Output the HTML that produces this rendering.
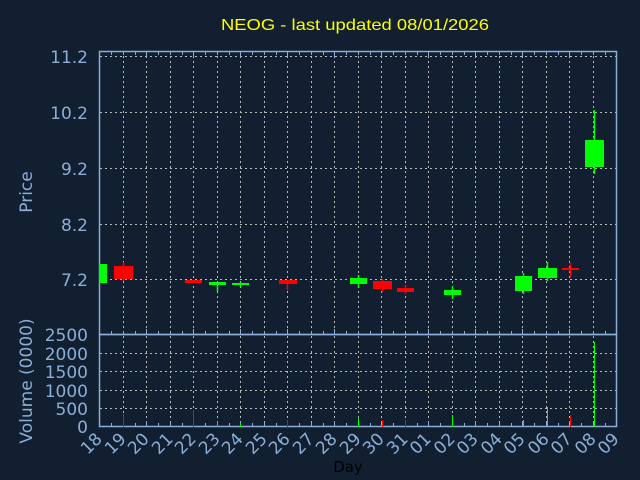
<!DOCTYPE html>
<html><head><meta charset="utf-8"><style>
html,body{margin:0;padding:0;background:#111f30;width:640px;height:480px;overflow:hidden}
svg{display:block}
text{font-family:"DejaVu Sans","Liberation Sans",sans-serif;fill:#8aaed6}
</style></head><body>
<svg width="640" height="480" viewBox="0 0 640 480">
<rect width="640" height="480" fill="#111f30"/>
<text x="355" y="30" text-anchor="middle" font-size="16" textLength="268" lengthAdjust="spacingAndGlyphs" style="fill:#ffff00;font-family:'Liberation Sans',sans-serif">NEOG - last updated 08/01/2026</text>
<g stroke="#b8b8b8" stroke-width="1" stroke-dasharray="2,3" fill="none">
<path d="M100 56.5H617M100 112.5H617M100 168.5H617M100 224.5H617M100 279.5H617"/>
<path d="M100 353.5H617M100 371.5H617M100 390.5H617M100 408.5H617"/>
<path d="M123.5 51V427M146.5 51V427M170.5 51V427M193.5 51V427M217.5 51V427M240.5 51V427M264.5 51V427M287.5 51V427M311.5 51V427M334.5 51V427M358.5 51V427M381.5 51V427M405.5 51V427M428.5 51V427M452.5 51V427M475.5 51V427M499.5 51V427M522.5 51V427M546.5 51V427M569.5 51V427M593.5 51V427"/>
</g>
<g stroke="#8aaed6" stroke-width="1.5" fill="none">
<rect x="99.5" y="51.5" width="517" height="283"/>
<rect x="99.5" y="334.5" width="517" height="92"/>
</g>
<g stroke="#8aaed6" stroke-width="1" fill="none">
<path d="M111.5 51V55M123.5 51V55M135.5 51V55M146.5 51V57M158.5 51V55M170.5 51V55M182.5 51V55M193.5 51V57M205.5 51V55M217.5 51V55M229.5 51V55M240.5 51V57M252.5 51V55M264.5 51V55M276.5 51V55M287.5 51V57M299.5 51V55M311.5 51V55M323.5 51V55M334.5 51V57M346.5 51V55M358.5 51V55M370.5 51V55M381.5 51V57M393.5 51V55M405.5 51V55M417.5 51V55M428.5 51V57M440.5 51V55M452.5 51V55M464.5 51V55M475.5 51V57M487.5 51V55M499.5 51V55M511.5 51V55M522.5 51V57M534.5 51V55M546.5 51V55M558.5 51V55M569.5 51V57M581.5 51V55M593.5 51V55M605.5 51V55"/>
<path d="M111.5 427V423M123.5 427V423M135.5 427V423M146.5 427V421M158.5 427V423M170.5 427V423M182.5 427V423M193.5 427V421M205.5 427V423M217.5 427V423M229.5 427V423M240.5 427V421M252.5 427V423M264.5 427V423M276.5 427V423M287.5 427V421M299.5 427V423M311.5 427V423M323.5 427V423M334.5 427V421M346.5 427V423M358.5 427V423M370.5 427V423M381.5 427V421M393.5 427V423M405.5 427V423M417.5 427V423M428.5 427V421M440.5 427V423M452.5 427V423M464.5 427V423M475.5 427V421M487.5 427V423M499.5 427V423M511.5 427V423M522.5 427V421M534.5 427V423M546.5 427V423M558.5 427V423M569.5 427V421M581.5 427V423M593.5 427V423M605.5 427V423"/>
<path d="M111.5 335V331M123.5 335V331M135.5 335V331M146.5 335V329M158.5 335V331M170.5 335V331M182.5 335V331M193.5 335V329M205.5 335V331M217.5 335V331M229.5 335V331M240.5 335V329M252.5 335V331M264.5 335V331M276.5 335V331M287.5 335V329M299.5 335V331M311.5 335V331M323.5 335V331M334.5 335V329M346.5 335V331M358.5 335V331M370.5 335V331M381.5 335V329M393.5 335V331M405.5 335V331M417.5 335V331M428.5 335V329M440.5 335V331M452.5 335V331M464.5 335V331M475.5 335V329M487.5 335V331M499.5 335V331M511.5 335V331M522.5 335V329M534.5 335V331M546.5 335V331M558.5 335V331M569.5 335V329M581.5 335V331M593.5 335V331M605.5 335V331"/>
</g>
<g fill="#00ff00" stroke="#00ff00">
<rect x="99" y="264" width="8" height="19" stroke="none"/>
<path d="M217.5 282V291M240.5 282V287M358.5 275V288M452.5 286V299M523.5 273V294M547.5 262V281M594.5 110V174" stroke-width="1.5"/>
<rect x="209" y="282" width="17" height="3" stroke="none"/>
<rect x="232" y="283" width="17" height="2" stroke="none"/>
<rect x="350" y="278" width="17" height="6" stroke="none"/>
<rect x="444" y="290" width="17" height="5" stroke="none"/>
<rect x="515" y="276" width="17" height="15" stroke="none"/>
<rect x="538" y="268" width="19" height="10" stroke="none"/>
<rect x="585" y="140" width="19" height="27" stroke="none"/>
</g>
<g fill="#ff0000" stroke="#ff0000">
<path d="M123.5 262V281M287.5 280V290M382.5 279V292M405.5 285V294M570.5 263V277" stroke-width="1.5"/>
<rect x="114" y="266" width="19" height="13" stroke="none"/>
<rect x="185" y="280" width="17" height="3" stroke="none"/>
<rect x="279" y="280" width="18" height="4" stroke="none"/>
<rect x="373" y="281" width="19" height="8" stroke="none"/>
<rect x="397" y="288" width="17" height="4" stroke="none"/>
<rect x="562" y="268" width="17" height="2" stroke="none"/>
</g>
<g stroke-width="1">
<path d="M123.5 414V427M193.5 410V427M287.5 420V427M382.5 420V427M405.5 420V427M570.5 415V427" stroke="#ff0000"/>
<path d="M217.5 421V427M240.5 423V427M358.5 417V427M452.5 415V427M523.5 420V427M547.5 407V427M594.5 342V427" stroke="#00ff00"/>
</g>
<g font-size="17" text-anchor="end">
<text x="88" y="63">11.2</text>
<text x="88" y="119">10.2</text>
<text x="88" y="175">9.2</text>
<text x="88" y="231">8.2</text>
<text x="88" y="286">7.2</text>
<text x="88" y="341">2500</text>
<text x="88" y="360">2000</text>
<text x="88" y="378">1500</text>
<text x="88" y="397">1000</text>
<text x="88" y="415">500</text>
<text x="88" y="433">0</text>
</g>
<text transform="translate(32,192) rotate(-90)" font-size="17" text-anchor="middle">Price</text>
<text transform="translate(32,381) rotate(-90)" font-size="17" text-anchor="middle">Volume (0000)</text>
<text x="348" y="472" font-size="15" text-anchor="middle" style="fill:#000">Day</text>
<g font-size="17" text-anchor="end">
<text transform="translate(103,440) rotate(-45)">18</text>
<text transform="translate(127,440) rotate(-45)">19</text>
<text transform="translate(150,440) rotate(-45)">20</text>
<text transform="translate(174,440) rotate(-45)">21</text>
<text transform="translate(197,440) rotate(-45)">22</text>
<text transform="translate(221,440) rotate(-45)">23</text>
<text transform="translate(244,440) rotate(-45)">24</text>
<text transform="translate(268,440) rotate(-45)">25</text>
<text transform="translate(291,440) rotate(-45)">26</text>
<text transform="translate(315,440) rotate(-45)">27</text>
<text transform="translate(338,440) rotate(-45)">28</text>
<text transform="translate(362,440) rotate(-45)">29</text>
<text transform="translate(385,440) rotate(-45)">30</text>
<text transform="translate(409,440) rotate(-45)">31</text>
<text transform="translate(432,440) rotate(-45)">01</text>
<text transform="translate(456,440) rotate(-45)">02</text>
<text transform="translate(479,440) rotate(-45)">03</text>
<text transform="translate(503,440) rotate(-45)">04</text>
<text transform="translate(526,440) rotate(-45)">05</text>
<text transform="translate(550,440) rotate(-45)">06</text>
<text transform="translate(573,440) rotate(-45)">07</text>
<text transform="translate(597,440) rotate(-45)">08</text>
<text transform="translate(620,440) rotate(-45)">09</text>
</g>
</svg>
</body></html>
